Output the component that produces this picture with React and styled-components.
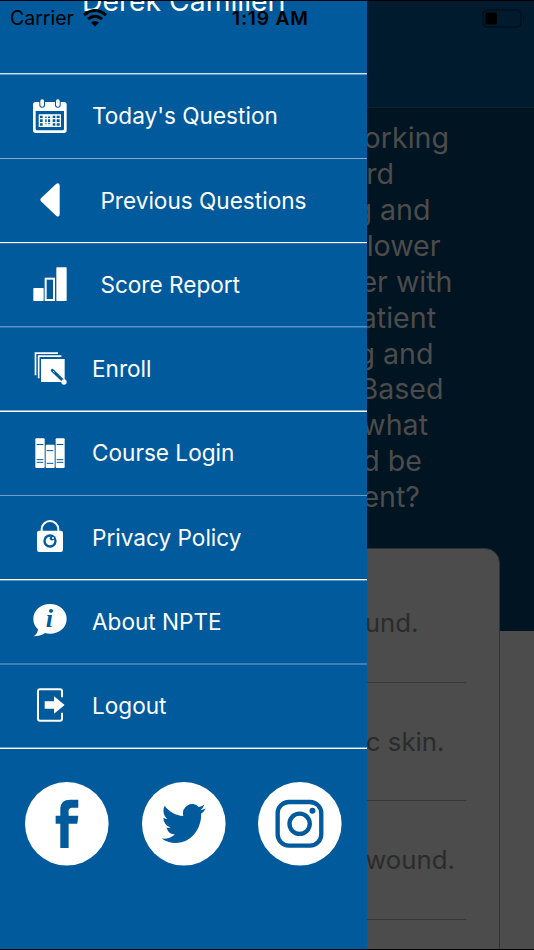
import styled, { createGlobalStyle } from 'styled-components';

const blue = '#005a9c';

const GlobalStyle = createGlobalStyle`
  * {
    box-sizing: border-box;
  }

  body {
    margin: 0;
    background: #000;
    font-family: Inter, 'Liberation Sans', sans-serif;
  }
`;

const Screen = styled.div`
  position: relative;
  width: 534px;
  height: 950px;
  padding: 1px 0;
  overflow: hidden;
  background: #000;
`;

const Page = styled.main`
  height: 948px;
  display: flex;
  flex-direction: column;
  overflow: hidden;
  background: #4c4c4c;
`;

const NavBar = styled.div`
  flex: none;
  height: 107px;
  background: #001b2d;
  border-bottom: 1px solid #0e2330;
`;

const Hero = styled.div`
  flex: none;
  height: 523px;
  padding-top: 12.4px;
  background: #001421;
`;

const QuestionLine = styled.div`
  height: 35.87px;
  padding-right: ${({ $end }) => 534 - $end}px;
  font-size: 28.6px;
  line-height: 35.87px;
  text-align: right;
  white-space: pre;
  color: #4c4c4c;
`;

const Answers = styled.div`
  flex: none;
  width: 500px;
  height: 440px;
  margin-top: -83px;
  padding-top: 15px;
  background: #4c4c4c;
  border: 1px solid #2c3439;
  border-radius: 15px;
`;

const Answer = styled.div`
  height: 118.6px;
  margin-right: 33px;
  padding-right: ${({ $end }) => 466 - $end}px;
  border-bottom: 1px solid #383838;
  font-size: 25.8px;
  line-height: 117.4px;
  text-align: right;
  color: #2b2b2b;
`;

const Drawer = styled.aside`
  position: absolute;
  top: 1px;
  left: 0;
  width: 367px;
  height: 948px;
  overflow: hidden;
  background: ${blue};
  color: #fff;
`;

const UserName = styled.div`
  height: 72px;
  padding-left: 82px;
  margin-top: -18px;
  margin-bottom: 18px;
  font-size: 28.3px;
  line-height: 37px;
  white-space: nowrap;
`;

const Menu = styled.nav`
  display: flex;
  flex-direction: column;
  border-top: 1px solid #cfe0ee;
  box-shadow: inset 0 1px #5d94c0;
`;

const MenuItem = styled.a`
  height: ${({ $tall }) => ($tall ? 85 : 84)}px;
  display: flex;
  align-items: center;
  padding: 0 0 1px 33.4px;
  gap: ${({ $indent }) => ($indent ? 33 : 24.6)}px;
  border-bottom: 1px solid ${({ $line }) => $line[0]};
  box-shadow: 0 1px ${({ $line }) => $line[1]};
  font-size: 22.6px;
  white-space: nowrap;
`;

const Icon = styled.svg`
  flex: none;
  width: 34px;
  height: 34px;
  fill: #fff;
`;

const Social = styled.div`
  display: flex;
  gap: 33px;
  padding: 34px 25px;
`;

const SocialLink = styled.svg`
  flex: none;
  width: 83.6px;
  height: 83.6px;
  overflow: visible;
  fill: ${blue};
`;

const StatusBar = styled.header`
  position: absolute;
  top: 0;
  left: 0;
  width: 534px;
  height: 35px;
  display: grid;
  grid-template-columns: 222px 1fr auto;
  align-items: center;
  padding: 1px 9px 0 10px;
  color: #000;
`;

const Carrier = styled.div`
  display: flex;
  align-items: center;
  gap: 9px;
  font-size: 19.5px;
`;

const Clock = styled.div`
  font-size: 19.2px;
  font-weight: 600;
  letter-spacing: 0.8px;
`;

const CalendarIcon = () => (
  <Icon viewBox="0 0 102 102">
    <path fillRule="evenodd" d="M8 9H93Q101 9 101 17V94Q101 102 93 102H8Q0 102 0 94V17Q0 9 8 9ZM8 36V90Q8 94 12 94H89Q93 94 93 90V36Z" />
    <rect x="22" y="1" width="11" height="22" rx="5" stroke={blue} strokeWidth="6" paintOrder="stroke" />
    <rect x="69" y="1" width="11" height="22" rx="5" stroke={blue} strokeWidth="6" paintOrder="stroke" />
    <path d="M17 48H84M17 59H84M17 71H84M17 82H84M19 46V84M31 46V84M43 46V84M57 46V84M69 46V84M82 46V84" stroke="#fff" strokeWidth="4" />
    <rect x="34" y="50" width="20" height="28" fill="none" stroke="#fff" strokeWidth="5" />
  </Icon>
);

const BackIcon = () => (
  <Icon viewBox="0 0 102 102">
    <path d="M24 46L70 2Q80-3 80 8V93Q80 104 70 99L24 55Q20 50 24 46Z" />
  </Icon>
);

const ScoreIcon = () => (
  <Icon viewBox="0 0 102 102">
    <rect x="1" y="63" width="31" height="39" rx="2" />
    <rect x="38" y="35" width="25" height="64" fill="none" stroke="#fff" strokeWidth="6" />
    <rect x="70" y="1" width="31" height="101" rx="2" />
  </Icon>
);

const EnrollIcon = () => (
  <Icon viewBox="0 0 102 102">
    <path d="M7.500 73V6.500H75M17 82V15.500H85" fill="none" stroke="#fff" strokeWidth="5" />
    <path d="M24 24H95V93H24Z" />
    <path d="M58 58L91 90" stroke={blue} strokeWidth="9" strokeLinecap="round" />
    <path d="M60 60L64 64" stroke="#fff" strokeWidth="2.500" />
    <circle cx="93" cy="93" r="8" />
  </Icon>
);

const CourseIcon = () => (
  <Icon viewBox="0 0 102 102">
    <rect x="7" y="7" width="28" height="89" rx="3" />
    <rect x="38" y="26" width="27" height="70" rx="3" />
    <rect x="68" y="7" width="27" height="89" rx="3" />
    <path d="M11 25.500H31M11 71H31M11 79H31M41 44H61M41 82H61M71 25.500H91M71 71H91M71 79H91" stroke={blue} strokeWidth="3" />
  </Icon>
);

const PrivacyIcon = () => (
  <Icon viewBox="0 0 102 102">
    <path d="M26 36V28A25 25 0 0 1 76 28V36" fill="none" stroke="#fff" strokeWidth="6" />
    <rect x="12" y="32" width="78" height="64" rx="7" />
    <circle cx="51" cy="63" r="20" fill={blue} />
    <circle cx="51" cy="63" r="13" />
    <circle cx="57" cy="55" r="6.500" fill={blue} />
    <circle cx="60" cy="54" r="3" />
  </Icon>
);

const AboutIcon = () => (
  <Icon viewBox="0 0 102 102">
    <path d="M51 0C79 0 101 19 101 45S79 89 51 89C45 89 40 88 36 87Q22 97 2 97Q14 89 15 76C6 68 1 57 1 45C1 19 23 0 51 0Z" />
    <text x="49" y="70" fill={blue} fontFamily="Liberation Serif, serif" fontSize="78" fontWeight="bold" fontStyle="italic" textAnchor="middle">i</text>
  </Icon>
);

const LogoutIcon = () => (
  <Icon viewBox="0 0 102 102">
    <path d="M87 28V10Q87 4 81 4H21Q15 4 15 10V92Q15 98 21 98H81Q87 98 87 92V74" fill="none" stroke="#fff" strokeWidth="6" />
    <path d="M35 40H63V25L95 51L63 77V62H35Z" />
  </Icon>
);

const Facebook = () => (
  <SocialLink viewBox="0 0 251 251">
    <circle cx="125.500" cy="125.500" r="125.500" fill="#fff" />
    <path d="M106 198V125H92V101H106V84C106 62 117 53 136 53H160V77H144C134 77 131 81 131 88V101H160L157 125H131V198Z" />
  </SocialLink>
);

const Twitter = () => (
  <SocialLink viewBox="0 0 251 251">
    <circle cx="125.500" cy="125.500" r="125.500" fill="#fff" />
    <path transform="translate(59 52.500) scale(5.500 6)" d="M23.953 4.57a10 10 0 01-2.825.775 4.958 4.958 0 002.163-2.723c-.951.555-2.005.959-3.127 1.184a4.92 4.92 0 00-8.384 4.482C7.69 8.095 4.067 6.13 1.64 3.162a4.822 4.822 0 00-.666 2.475c0 1.71.87 3.213 2.188 4.096a4.904 4.904 0 01-2.228-.616v.06a4.923 4.923 0 003.946 4.827 4.996 4.996 0 01-2.212.085 4.936 4.936 0 004.604 3.417 9.867 9.867 0 01-6.102 2.105c-.39 0-.779-.023-1.17-.067a13.995 13.995 0 007.557 2.209c9.053 0 13.998-7.496 13.998-13.985 0-.21 0-.42-.015-.63A9.935 9.935 0 0024 4.59z" />
  </SocialLink>
);

const Instagram = () => (
  <SocialLink viewBox="0 0 251 251">
    <circle cx="125.500" cy="125.500" r="125.500" fill="#fff" />
    <rect x="59" y="60" width="131" height="131" rx="34" fill="none" stroke={blue} strokeWidth="13" />
    <circle cx="125" cy="125.500" r="30.500" fill="none" stroke={blue} strokeWidth="13" />
    <circle cx="163.500" cy="86.500" r="9" />
  </SocialLink>
);

const Wifi = () => (
  <svg width="24" height="18" viewBox="0 0 24 18">
    <path d="M1 6.200Q12-3.200 23 6.200M5 10.200Q12 4.200 19 10.200" fill="none" stroke="#000" strokeWidth="3" />
    <path d="M8 13.500Q12 10.500 16 13.500L12 17.500Z" />
  </svg>
);

const Battery = () => (
  <svg width="43" height="19" viewBox="0 0 43 19">
    <rect x="1" y="1" width="38" height="17" rx="4.500" fill="none" stroke="#00101b" strokeWidth="1.500" />
    <rect x="3.500" y="3.500" width="11.500" height="12" rx="1" />
    <path d="M41 6.500Q43 9.500 41 12.500Z" fill="#00101b" />
  </svg>
);

const question = [
  ['orking', 449],
  ['rd', 394],
  ['g and', 430.5],
  ['lower', 440.5],
  ['er with', 452.5],
  ['atient', 436],
  ['g and', 433.5],
  ['Based', 443.5],
  ['what', 428],
  ['d be', 422],
  ['ent?', 420],
];

const answers = [
  ['und.', 418.5],
  ['c skin.', 444.5],
  ['wound.', 455],
];

// line holds the two pixel rows of the hairline under each item
const items = [
  { label: "Today's Question", icon: CalendarIcon, tall: true, line: ['#7fabce', 'transparent'] },
  { label: 'Previous Questions', icon: BackIcon, indent: true, line: ['#fff', '#2b74ac'] },
  { label: 'Score Report', icon: ScoreIcon, indent: true, line: ['#5c94c0', '#2b74ac'] },
  { label: 'Enroll', icon: EnrollIcon, line: ['#80acce', '#fff'] },
  { label: 'Course Login', icon: CourseIcon, tall: true, line: ['#6c9fc7', 'transparent'] },
  { label: 'Privacy Policy', icon: PrivacyIcon, line: ['#fff', '#5c94c0'] },
  { label: 'About NPTE', icon: AboutIcon, line: ['#3f80b4', '#3f80b4'] },
  { label: 'Logout', icon: LogoutIcon, line: ['#6c9fc7', '#fff'] },
];

const App = () => (
  <Screen>
    <GlobalStyle />
    <Page>
      <NavBar />
      <Hero>
        {question.map(([text, end]) => (
          <QuestionLine key={end} $end={end}>{text}</QuestionLine>
        ))}
      </Hero>
      <Answers>
        {answers.map(([text, end]) => (
          <Answer key={text} $end={end}>{text}</Answer>
        ))}
        <Answer $end={466} />
      </Answers>
    </Page>
    <Drawer>
      <UserName>Derek Camilleri</UserName>
      <Menu>
        {items.map(({ label, icon: ItemIcon, indent, tall, line }) => (
          <MenuItem key={label} $indent={indent} $tall={tall} $line={line}>
            <ItemIcon />
            {label}
          </MenuItem>
        ))}
      </Menu>
      <Social>
        <Facebook />
        <Twitter />
        <Instagram />
      </Social>
    </Drawer>
    <StatusBar>
      <Carrier>
        Carrier
        <Wifi />
      </Carrier>
      <Clock>1:19 AM</Clock>
      <Battery />
    </StatusBar>
  </Screen>
);

export default App;
